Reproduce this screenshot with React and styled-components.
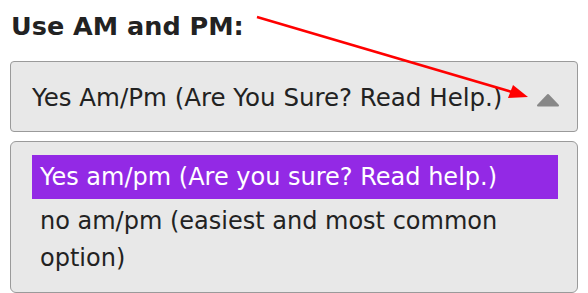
import React from 'react';
import styled, { createGlobalStyle } from 'styled-components';

const GlobalStyle = createGlobalStyle`
  html, body {
    margin: 0;
    padding: 0;
    background: #ffffff;
  }
  body {
    font-family: "DejaVu Sans", "Open Sans", sans-serif;
    color: #222222;
    overflow: hidden;
  }
`;

const Page = styled.div`
  position: relative;
  width: 588px;
  height: 293px;
  padding: 8px 10px 0 10px;
  box-sizing: border-box;
  overflow: hidden;
`;

const Label = styled.div`
  margin: 0 0 0 1px;
  height: 53px;
  font-size: 25.5px;
  font-weight: 700;
  line-height: 36px;
  color: #222222;
`;

const Select = styled.div`
  height: 71px;
  box-sizing: border-box;
  border: 1px solid #9a9a9a;
  border-radius: 4px;
  background: #e8e8e8;
  display: flex;
  align-items: center;
  justify-content: space-between;
  padding: 2px 17px 0 21px;
  font-size: 24.5px;
  color: #222222;
  white-space: nowrap;
`;

const Caret = styled.svg`
  width: 24px;
  height: 14px;
  margin-top: 4px;
  flex-shrink: 0;
`;

const List = styled.div`
  margin-top: 9px;
  height: 152px;
  box-sizing: border-box;
  border: 1px solid #9a9a9a;
  border-radius: 6px;
  background: #e8e8e8;
  padding: 13px 19px 0 21px;
`;

const Option = styled.div`
  padding: 4px 8px 3px 8px;
  font-size: 24px;
  line-height: 37px;
  color: ${p => (p.$active ? '#ffffff' : '#222222')};
  background: ${p => (p.$active ? '#9329e5' : 'transparent')};
`;

const Pointer = styled.svg`
  position: absolute;
  top: 0;
  left: 0;
  width: 588px;
  height: 293px;
  pointer-events: none;
`;

export default function App() {
  return (
    <>
      <GlobalStyle />
      <Page>
        <Label>Use AM and PM:</Label>
        <Select>
          <span>Yes Am/Pm (Are You Sure? Read Help.)</span>
          <Caret viewBox="0 0 24 14">
            <polygon
              points="2,12.5 12,2 22,12.5"
              fill="#888888"
              stroke="#888888"
              strokeWidth="2"
              strokeLinejoin="round"
            />
          </Caret>
        </Select>
        <List>
          <Option $active>Yes am/pm (Are you sure? Read help.)</Option>
          <Option>no am/pm (easiest and most common option)</Option>
        </List>
        <Pointer viewBox="0 0 588 293">
          <line x1="257" y1="17" x2="512" y2="92" stroke="#ff0000" strokeWidth="2.5" />
          <polygon points="528,97 508,98 513,85" fill="#ff0000" />
        </Pointer>
      </Page>
    </>
  );
}
